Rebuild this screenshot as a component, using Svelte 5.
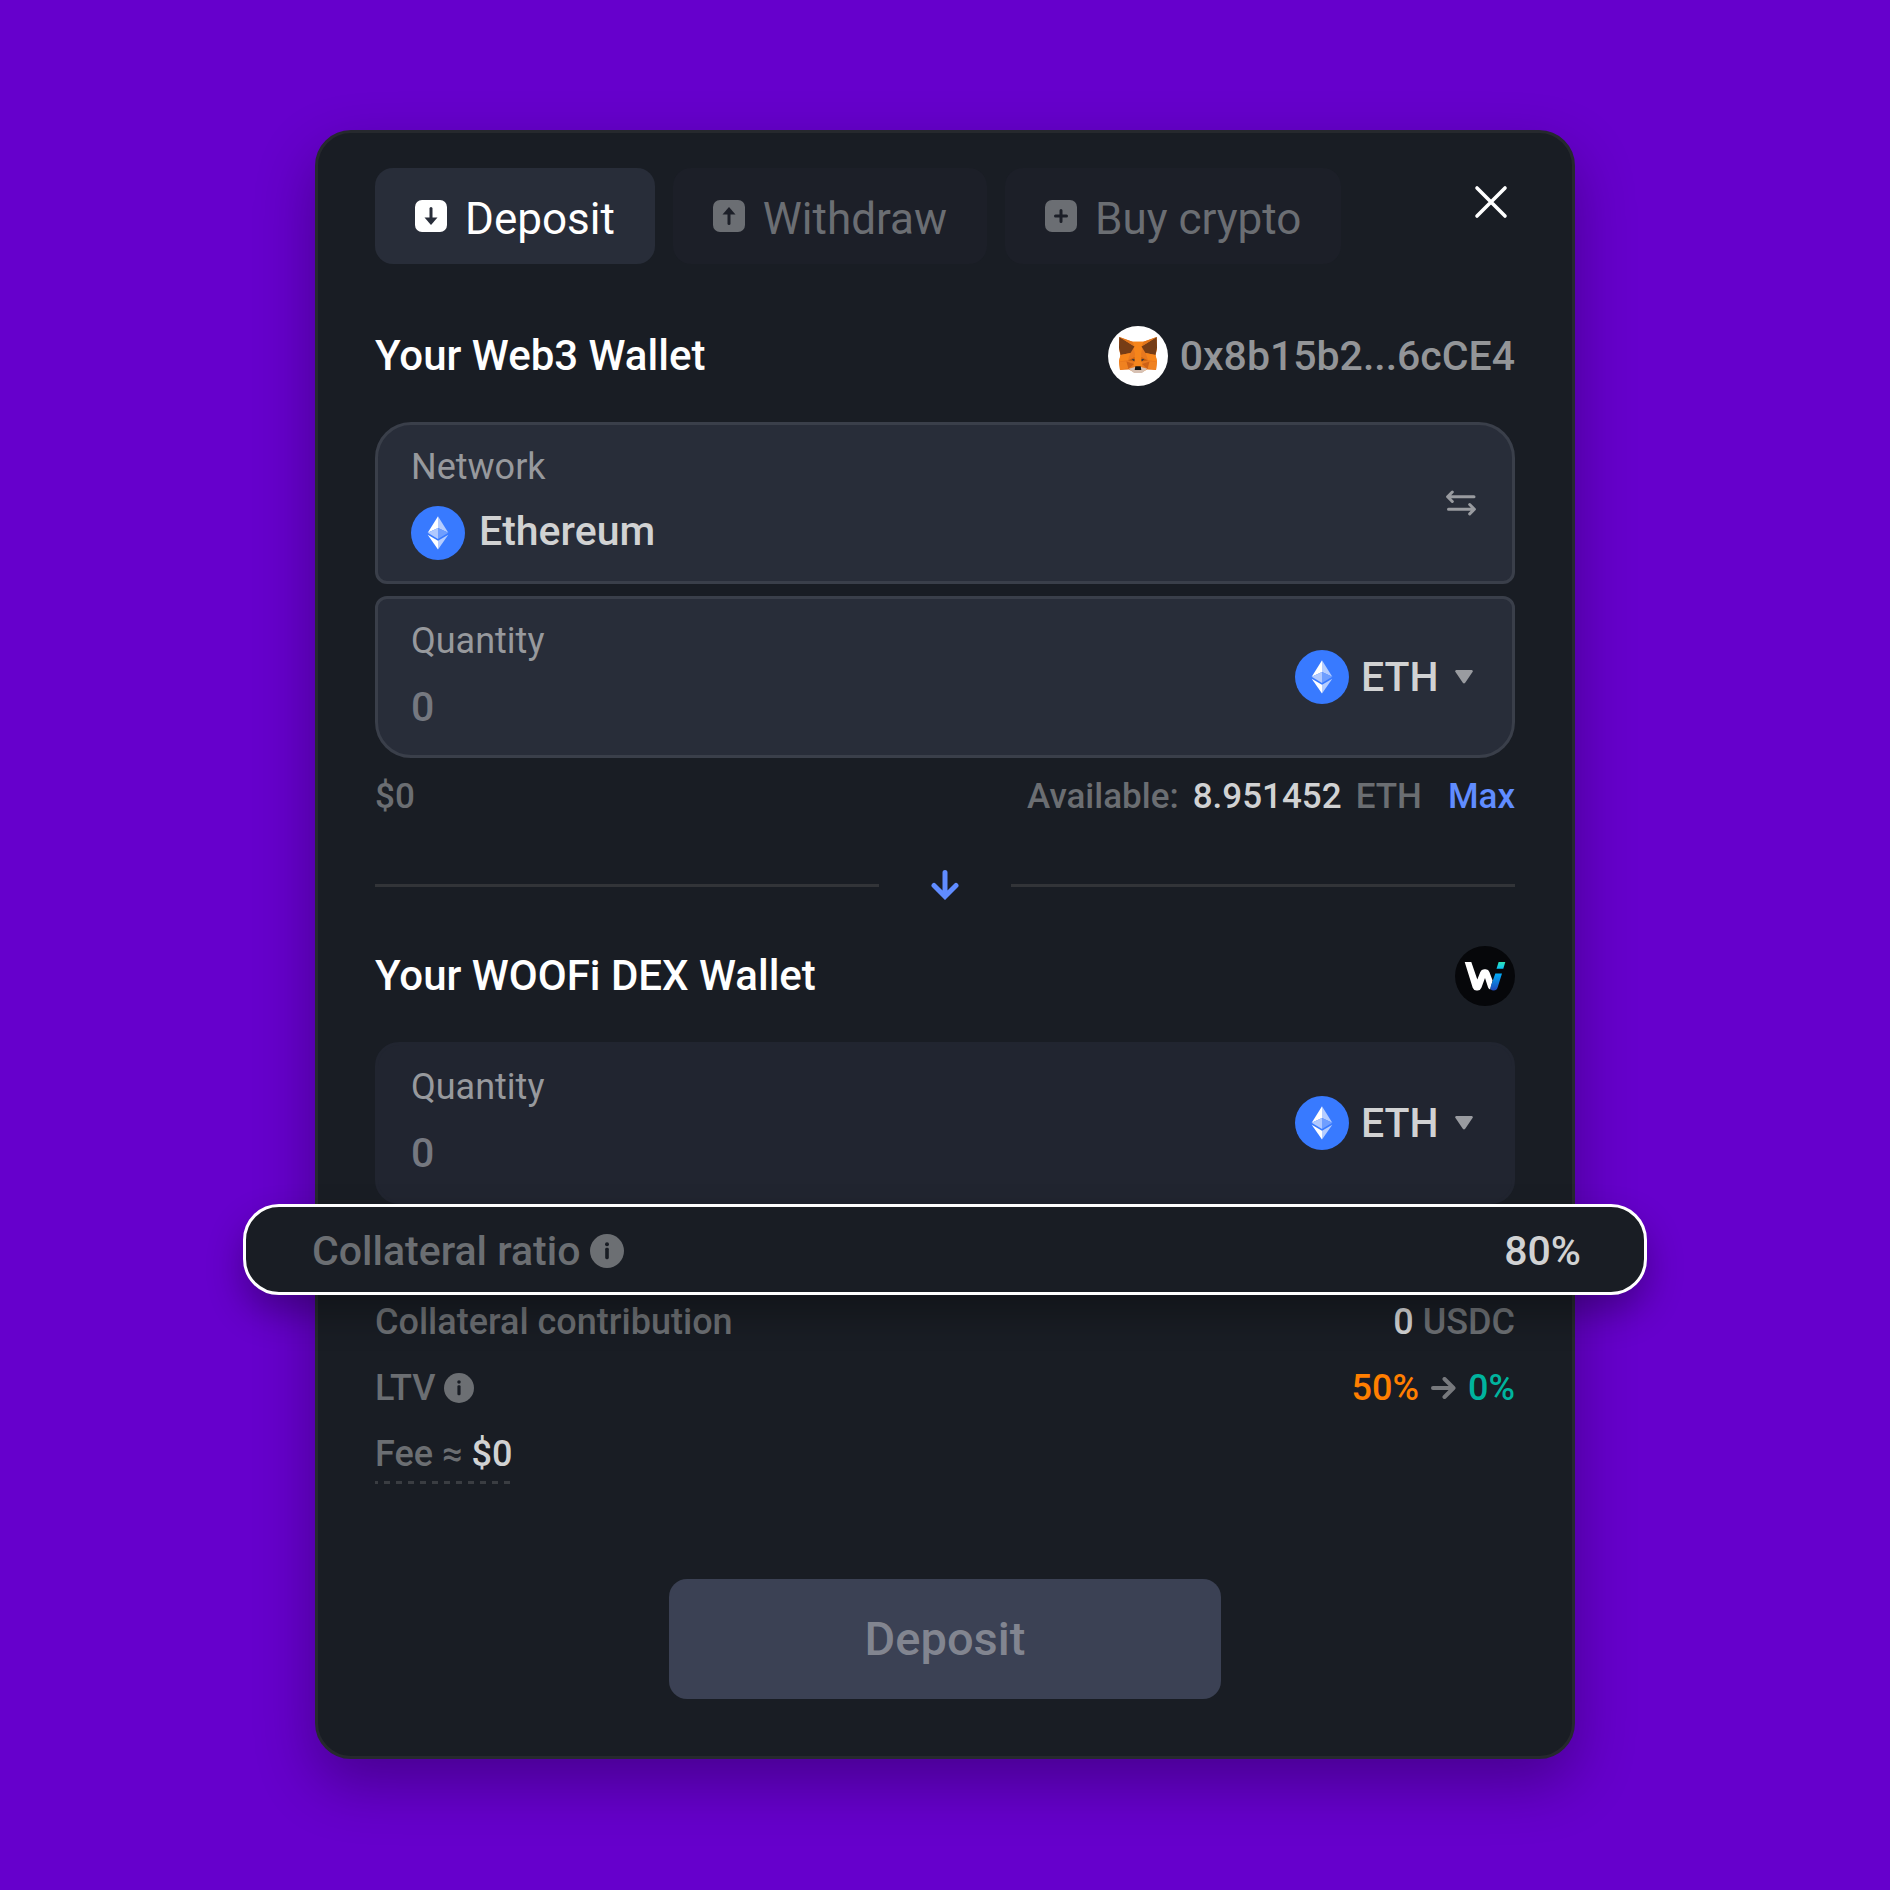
<script>
  const tabs = [
    { id: 'deposit', label: 'Deposit', icon: 'down' },
    { id: 'withdraw', label: 'Withdraw', icon: 'up' },
    { id: 'buy', label: 'Buy crypto', icon: 'plus' }
  ];
  let active = $state('deposit');
  let amount = $state('');
  let received = $state('');
</script>

{#snippet ethIcon()}
  <svg class="coin" viewBox="0 0 54 54" aria-hidden="true">
    <circle cx="27" cy="27" r="27" fill="#387aff" />
    <path d="M27 10.3 16.7 26.8 27 22z" fill="#fff" />
    <path d="M27 10.3 37.3 26.8 27 22z" fill="#b5cdff" />
    <path d="M27 22 16.7 26.8 27 33z" fill="#b0c9ff" />
    <path d="M27 22 37.3 26.8 27 33z" fill="#6f9eff" />
    <path d="M16.7 28.7 27 34.7v8.7z" fill="#fff" />
    <path d="M37.3 28.7 27 34.7v8.7z" fill="#b5cdff" />
  </svg>
{/snippet}

{#snippet infoIcon()}
  <svg viewBox="0 0 34 34" aria-hidden="true">
    <circle cx="17" cy="17" r="17" fill="#6c6f73" />
    <circle cx="17" cy="10.3" r="2" fill="#191d24" />
    <rect x="15.2" y="13.8" width="3.6" height="11.4" rx="1.4" fill="#191d24" />
  </svg>
{/snippet}

{#snippet tokenSelect(id)}
  <div class="token">
    {@render ethIcon()}
    <select {id} aria-label="Token">
      <option>ETH</option>
    </select>
    <svg class="caret" viewBox="0 0 18 14" aria-hidden="true">
      <path d="M1.5 0h15a1.2 1.2 0 0 1 1 2l-7.3 10.8a1.5 1.5 0 0 1-2.4 0L.5 2a1.2 1.2 0 0 1 1-2z" fill="#999ba0" />
    </svg>
  </div>
{/snippet}

<main>
  <section class="card" aria-label="Transfer">
    <header class="top">
      <nav class="tabs">
        {#each tabs as tab (tab.id)}
          <button class="tab" class:active={active === tab.id} onclick={() => (active = tab.id)}>
            <svg viewBox="0 0 32 32" aria-hidden="true">
              <rect width="32" height="32" rx="7" fill="currentColor" />
              {#if tab.icon === 'down'}
                <path class="cut-line" d="M16 8.5v10" />
                <path class="cut" d="M9.5 17.5h13L16 25z" />
              {:else if tab.icon === 'up'}
                <path class="cut-line" d="M16 14v9.5" />
                <path class="cut" d="M9.5 14.5h13L16 7z" />
              {:else}
                <path class="cut-line" d="M16 10.5v11M10.5 16h11" />
              {/if}
            </svg>
            <span>{tab.label}</span>
          </button>
        {/each}
      </nav>
      <button class="close" aria-label="Close">
        <svg viewBox="0 0 34 34" aria-hidden="true">
          <path d="M3 3l28 28M31 3 3 31" stroke="#fff" stroke-width="3.6" stroke-linecap="round" />
        </svg>
      </button>
    </header>

    <div class="wallet first">
      <h2>Your Web3 Wallet</h2>
      <div class="account">
        <svg class="badge" viewBox="0 0 60 60" aria-hidden="true">
          <circle cx="30" cy="30" r="30" fill="#fff" />
          <path d="M11.3 11 24.5 15.7h11L48.7 11 49 23l-1.5 6L49 35l-1 9-9-.5-5.5 3h-7l-5.5-3-9 .5-1-9 1.5-6-1.500-6z" fill="#e8791f" />
          <path d="M24 15.7h12l-3 12 1.5 13h-9l1.5-13z" fill="#f6851b" />
          <path d="M11.3 11 26.5 20.5 22.5 27 12.5 29 11 21.5z" fill="#763d16" />
          <path d="M48.7 11 33.5 20.5 37.5 27 47.5 29 49 21.5z" fill="#763d16" />
          <path d="M11.3 11 24.5 15.7l2 4.8zM48.7 11 35.5 15.7l-2 4.8z" fill="#e2761b" />
          <path d="M12.5 29 22.5 27l-2.5 7-9 1.5zM47.5 29 37.5 27l2.5 7 9 1.5z" fill="#f6851b" />
          <path d="M20 34.5 26.5 31l.5 4.5zM40 34.5 33.5 31l-.5 4.5z" fill="#c8600f" />
          <path d="M18.500 35.5 20.5 42l-8.500 2-1-8zM41.500 35.5 39.5 42l8.500 2 1-8z" fill="#f08220" />
          <path d="M18.5 35.5 26 38l-5.500 5zM41.5 35.5 34 38l5.500 5z" fill="#cd6116" />
          <path d="M23.5 33l3 .3-.3 2zM36.5 33l-3 .3.3 2z" fill="#233447" />
          <path d="M20.8 42.8 27 41h6l6.2 1.8L34 47h-8z" fill="#d7c1b3" />
          <path d="M27.3 40.3h5.4l.6 3.7h-6.600z" fill="#161616" />
        </svg>
        <span>0x8b15b2...6cCE4</span>
      </div>
    </div>

    <div class="field linked upper">
      <div class="body">
        <span class="label">Network</span>
        <div class="value">{@render ethIcon()}<strong>Ethereum</strong></div>
      </div>
      <button class="swap" aria-label="Switch network">
        <svg viewBox="0 0 30 26" aria-hidden="true">
          <path d="M28 6.8H2M6.3 2 1.6 6.8l4.7 4.7M2.5 19.2H28M23.7 14.5l4.7 4.7-4.7 4.7" />
        </svg>
      </button>
    </div>
    <div class="field linked lower">
      <div class="body">
        <label class="label" for="amount">Quantity</label>
        <input id="amount" inputmode="decimal" placeholder="0" bind:value={amount} />
      </div>
      {@render tokenSelect('from-token')}
    </div>

    <div class="balance">
      <span>$0</span>
      <div class="available">
        <span>Available:</span>
        <b>8.951452</b>
        <span>ETH</span>
        <button class="max">Max</button>
      </div>
    </div>

    <div class="divider">
      <svg viewBox="0 0 28 30" aria-hidden="true">
        <path d="M14 2.5v23M3 15.5 14 26.500l11-11" />
      </svg>
    </div>

    <div class="wallet">
      <h2>Your WOOFi DEX Wallet</h2>
      <svg class="badge" viewBox="0 0 60 60" aria-hidden="true">
        <defs>
          <linearGradient id="dot" x1="0" y1="0" x2="0" y2="1">
            <stop offset="0" stop-color="#2fe3b4" /><stop offset="1" stop-color="#0cc0f5" />
          </linearGradient>
          <linearGradient id="stem" x1="0" y1="0" x2="0" y2="1">
            <stop offset="0" stop-color="#00adf8" /><stop offset="1" stop-color="#1e49bd" />
          </linearGradient>
        </defs>
        <circle cx="30" cy="30" r="30" fill="#06070a" />
        <path d="M9.7 16h6.600l6 17.500 3-7.500q1-2.800 3.800-2.800h1.700q2.700 0 3.600 2.800l3.200 8.500-2.400 9q-1.500-.3-2.100-2L30 32l-3.600 9.800q-1 2.700-3.800 2.700h-1.200q-2.700 0-3.700-2.700z" fill="#fff" />
        <path d="M40.3 27.5H47l-4.300 13.700q-1 3.300-4 3.300-4.200 0-3-4z" fill="url(#stem)" />
        <path d="M43.6 16h6.700l-2 6.700h-6.800z" fill="url(#dot)" />
      </svg>
    </div>

    <div class="field plain">
      <div class="body">
        <label class="label" for="received">Quantity</label>
        <input id="received" inputmode="decimal" placeholder="0" bind:value={received} />
      </div>
      {@render tokenSelect('to-token')}
    </div>

    <div class="highlight">
      <span class="term">Collateral ratio {@render infoIcon()}</span>
      <b>80%</b>
    </div>

    <div class="rows">
      <div class="row">
        <span>Collateral contribution</span>
        <span><b>0</b> USDC</span>
      </div>
      <div class="row">
        <span class="term">LTV {@render infoIcon()}</span>
        <span class="change">
          <b class="from">50%</b>
          <svg viewBox="0 0 25 22" aria-hidden="true"><path d="M2 11h20M13.5 2l9 9-9 9" /></svg>
          <b class="to">0%</b>
        </span>
      </div>
      <div class="row">
        <span class="fee">Fee ≈ <b>$0</b></span>
      </div>
    </div>

    <button class="submit">Deposit</button>
  </section>
</main>

<style>
  :global(body) {
    background: #6600cc;
  }
  main {
    box-sizing: border-box;
    min-height: 100vh;
    padding: 130px 80px;
    font-family: Roboto, 'Liberation Sans', sans-serif;
    font-size: 36px;
    line-height: 42px;
    color: #6b6e72;
  }
  .card {
    box-sizing: border-box;
    max-width: 1260px;
    margin: 0 auto;
    padding: 35px 57px 57px;
    border: 3px solid #26292e;
    border-radius: 36px;
    background: #191d24;
    box-shadow: 0 24px 60px rgba(0, 0, 0, 0.3);
  }
  svg {
    display: block;
    flex: none;
    fill: none;
  }
  button,
  input,
  select {
    margin: 0;
    padding: 0;
    border: 0;
    background: none;
    font: inherit;
    color: inherit;
  }
  button {
    cursor: pointer;
  }
  b,
  strong {
    font-weight: 500;
    color: #d1d2d3;
  }
  .top {
    display: flex;
    justify-content: space-between;
    align-items: flex-start;
  }
  .tabs {
    display: flex;
    gap: 18px;
  }
  .tab {
    display: flex;
    align-items: center;
    gap: 18px;
    height: 96px;
    padding: 0 40px;
    border-radius: 18px;
    background: #1c1f28;
    color: #6b6e73;
    font-size: 44px;
    white-space: nowrap;
    --cut: #1c1f28;
  }
  .tab.active {
    background: #282d39;
    color: #fff;
    --cut: #282d39;
  }
  .tab svg {
    width: 32px;
  }
  .tab span {
    padding-top: 6px;
  }
  .cut {
    fill: var(--cut);
  }
  .cut-line {
    stroke: var(--cut);
    stroke-width: 3;
    stroke-linecap: round;
  }
  .close {
    margin: 17px 7px 0 0;
  }
  .close svg {
    width: 34px;
  }
  .wallet {
    display: flex;
    align-items: center;
    justify-content: space-between;
    margin: 46px 0 36px;
    font-size: 41px;
    font-weight: 500;
  }
  .wallet.first {
    margin-top: 62px;
  }
  h2 {
    margin: 0;
    font: inherit;
    font-size: 42px;
    color: #fff;
  }
  .account {
    display: flex;
    align-items: center;
    gap: 12px;
    color: #939598;
  }
  .badge {
    width: 60px;
  }
  .field {
    display: flex;
    align-items: center;
    justify-content: space-between;
    box-sizing: border-box;
    padding: 21px 36px 21px 33px;
    border: 3px solid #3a3f4a;
    background: #282d39;
  }
  .upper {
    border-radius: 36px 36px 12px 12px;
    margin-bottom: 12px;
  }
  .lower {
    border-radius: 12px 12px 36px 36px;
  }
  .plain {
    border-color: #212530;
    border-radius: 24px;
    background: #212530;
  }
  .body {
    display: flex;
    flex: 1;
    flex-direction: column;
    gap: 18px;
    min-width: 0;
  }
  .label {
    color: #97999d;
  }
  .value {
    display: flex;
    align-items: center;
    gap: 14px;
    font-size: 41px;
  }
  .value strong {
    padding-bottom: 4px;
  }
  .coin {
    width: 54px;
  }
  input {
    width: 100%;
    height: 54px;
    font-size: 41px;
    font-weight: 500;
    color: #d1d2d3;
    outline: none;
  }
  input::placeholder {
    color: #757880;
    opacity: 1;
  }
  .swap svg {
    width: 30px;
    stroke: #999ba0;
    stroke-width: 3;
    stroke-linecap: round;
    stroke-linejoin: round;
  }
  .token {
    display: flex;
    align-items: center;
    padding-right: 3px;
  }
  select {
    appearance: none;
    margin-right: -48px;
    padding: 0 48px 0 12px;
    font-size: 41px;
    line-height: 54px;
    font-weight: 500;
    color: #d1d2d3;
    cursor: pointer;
  }
  option {
    background: #282d39;
  }
  .caret {
    width: 18px;
    margin-left: 16px;
    pointer-events: none;
  }
  .balance,
  .available,
  .row,
  .highlight,
  .term,
  .change {
    display: flex;
    align-items: center;
  }
  .balance,
  .row,
  .highlight {
    justify-content: space-between;
  }
  .balance {
    margin-top: 18px;
    font-size: 35px;
    font-weight: 500;
  }
  .available {
    gap: 14px;
  }
  .max {
    margin-left: 12px;
    color: #608cff;
    font-weight: 500;
  }
  .divider {
    display: flex;
    align-items: center;
    gap: 52px;
    margin-top: 52px;
  }
  .divider::before,
  .divider::after {
    content: '';
    flex: 1;
    height: 3px;
    background: #323438;
  }
  .divider svg {
    width: 28px;
    stroke: #608cff;
    stroke-width: 5;
    stroke-linecap: round;
  }
  .highlight {
    position: relative;
    margin: 0 -132px;
    padding: 23px 63px 20px 66px;
    border: 3px solid #fff;
    border-radius: 36px;
    background: #191d24;
    box-shadow: 0 18px 36px rgba(0, 0, 0, 0.3);
    font-size: 41px;
    font-weight: 500;
  }
  .term {
    gap: 8px;
  }
  .highlight .term {
    gap: 10px;
  }
  .highlight .term svg {
    width: 34px;
  }
  .row .term svg {
    width: 30px;
  }
  .rows {
    display: flex;
    flex-direction: column;
    gap: 24px;
    margin-top: 6px;
    font-weight: 500;
  }
  .change {
    gap: 12px;
  }
  .change svg {
    width: 25px;
    stroke: #77797d;
    stroke-width: 4;
    stroke-linecap: round;
    stroke-linejoin: round;
  }
  .from {
    color: #ff7f00;
  }
  .to {
    color: #00b49e;
  }
  .fee {
    padding-bottom: 9px;
    background: repeating-linear-gradient(90deg, #3a3d42 0 3px, transparent 3px 9px, #3a3d42 9px 12px) 0 100% / 100% 3px no-repeat;
  }
  .submit {
    display: block;
    width: 100%;
    max-width: 552px;
    margin: 95px auto 0;
    padding: 39px 0;
    border-radius: 18px;
    background: #3b4154;
    color: #828590;
    font-size: 47px;
    font-weight: 500;
  }
</style>
